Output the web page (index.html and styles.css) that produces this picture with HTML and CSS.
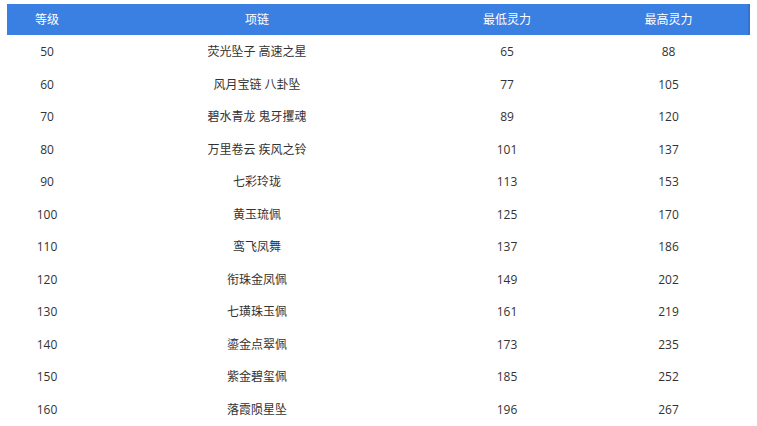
FILE: index.html
```html
<!DOCTYPE html>
<html lang="zh-CN">
<head>
<meta charset="utf-8">
<title>项链</title>
<link rel="stylesheet" href="styles.css">
</head>
<body>
<div class="wrap">
<table class="grid">
<colgroup>
<col class="c1"><col class="c2"><col class="c3"><col class="c4">
</colgroup>
<thead>
<tr><th>等级</th><th>项链</th><th>最低灵力</th><th>最高灵力</th></tr>
</thead>
<tbody>
<tr><td>50</td><td>荧光坠子 高速之星</td><td>65</td><td>88</td></tr>
<tr><td>60</td><td>风月宝链 八卦坠</td><td>77</td><td>105</td></tr>
<tr><td>70</td><td>碧水青龙 鬼牙攫魂</td><td>89</td><td>120</td></tr>
<tr><td>80</td><td>万里卷云 疾风之铃</td><td>101</td><td>137</td></tr>
<tr><td>90</td><td>七彩玲珑</td><td>113</td><td>153</td></tr>
<tr><td>100</td><td>黄玉琉佩</td><td>125</td><td>170</td></tr>
<tr><td>110</td><td>鸾飞凤舞</td><td>137</td><td>186</td></tr>
<tr><td>120</td><td>衔珠金凤佩</td><td>149</td><td>202</td></tr>
<tr><td>130</td><td>七璜珠玉佩</td><td>161</td><td>219</td></tr>
<tr><td>140</td><td>鎏金点翠佩</td><td>173</td><td>235</td></tr>
<tr><td>150</td><td>紫金碧玺佩</td><td>185</td><td>252</td></tr>
<tr><td>160</td><td>落霞陨星坠</td><td>196</td><td>267</td></tr>
</tbody>
</table>
</div>
</body>
</html>
```
FILE: styles.css
```css
html, body {
  margin: 0;
  padding: 0;
  background: #ffffff;
}
.wrap {
  padding: 4px 7px 0 7px;
}
.grid {
  width: 743px;
  border-collapse: collapse;
  table-layout: fixed;
  font-family: "Open Sans", "Noto Sans CJK SC", sans-serif;
  font-size: 12px;
  color: #333333;
}
.c1 { width: 80px; }
.c2 { width: 340px; }
.c3 { width: 160px; }
.c4 { width: 163px; }
.grid th {
  background: #3a80e3;
  color: #ffffff;
  font-weight: normal;
  height: 31px;
  padding: 0;
  line-height: 31px;
  text-align: center;
}
.grid th:last-child {
  box-shadow: inset -2px 0 0 #3272d0;
}
.grid td {
  text-align: center;
  padding: 6px 0 4px 0;
  line-height: 22.5px;
}
```
